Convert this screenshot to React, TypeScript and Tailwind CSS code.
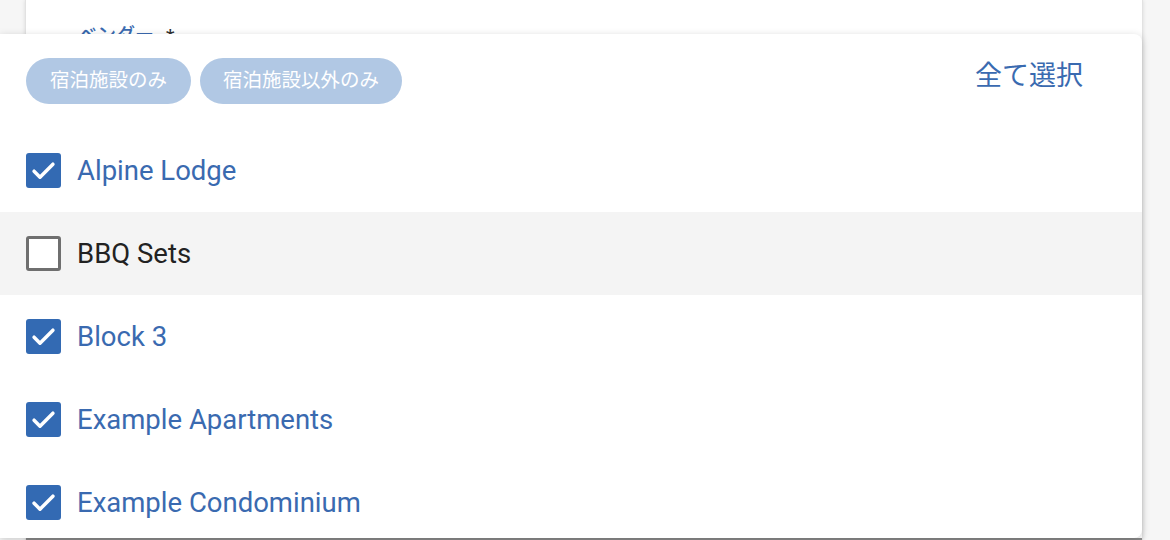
import React from "react";

const items = [
  { label: "Alpine Lodge", checked: true },
  { label: "BBQ Sets", checked: false, hover: true },
  { label: "Block 3", checked: true },
  { label: "Example Apartments", checked: true },
  { label: "Example Condominium", checked: true },
];

const Check: React.FC<{ checked: boolean }> = ({ checked }) =>
  checked ? (
    <span className="flex items-center justify-center w-[35px] h-[35px] rounded-[3px] bg-[#336ab3] shrink-0">
      <svg width="29" height="29" viewBox="0 0 24 24" fill="none">
        <path d="M4.2 12.6l4.9 4.9L19.8 6.8" stroke="white" strokeWidth="2.9" strokeLinecap="round" strokeLinejoin="round" />
      </svg>
    </span>
  ) : (
    <span className="w-[35px] h-[35px] rounded-[3px] border-[3px] border-[#6f6f6f] bg-white shrink-0" />
  );

export default function App() {
  return (
    <div
      className="relative w-[1170px] h-[540px] overflow-hidden bg-[#f6f6f6]"
      style={{ fontFamily: "Roboto, 'Noto Sans CJK JP', sans-serif" }}
    >
      {/* card behind the dropdown */}
      <div className="ml-[25px] w-[1118px] h-full bg-white border-l border-r border-[#e2e2e2] shadow-[0_0_4px_rgba(0,0,0,0.12)] flex flex-col justify-between">
        <div className="pl-[52px] pt-[26px] text-[19px] leading-none text-[#3a6ab0] font-medium">
          ベンダー<span className="text-[#333] ml-[12px]">*</span>
        </div>
        <div className="h-[2px] border-b-2 border-[#8a8a8a]" />
      </div>

      {/* dropdown panel */}
      <div className="absolute left-0 top-[34px] w-[1142px] h-[504px] bg-white rounded-r-lg shadow-[0_2px_8px_rgba(0,0,0,0.18)] overflow-hidden">
        <div className="flex items-start justify-between pl-[26px] pr-[59px] pt-[24px] h-[95px]">
          <div className="flex gap-[9px]">
            <button className="h-[46px] px-[24px] rounded-full bg-[#b1c8e4] text-white text-[19.5px]">
              宿泊施設のみ
            </button>
            <button className="h-[46px] px-[23px] rounded-full bg-[#b1c8e4] text-white text-[19.5px]">
              宿泊施設以外のみ
            </button>
          </div>
          <button className="text-[27px] leading-none text-[#3a6ab0] mt-[5px]">全て選択</button>
        </div>
        {items.map((it) => (
          <div
            key={it.label}
            className={`flex items-center gap-[16px] h-[83px] pl-[26px] ${it.hover ? "bg-[#f4f4f4]" : ""}`}
          >
            <Check checked={it.checked} />
            <span className={`text-[27.5px] ${it.checked ? "text-[#3a6ab0]" : "text-[#222]"}`}>{it.label}</span>
          </div>
        ))}
      </div>
    </div>
  );
}
